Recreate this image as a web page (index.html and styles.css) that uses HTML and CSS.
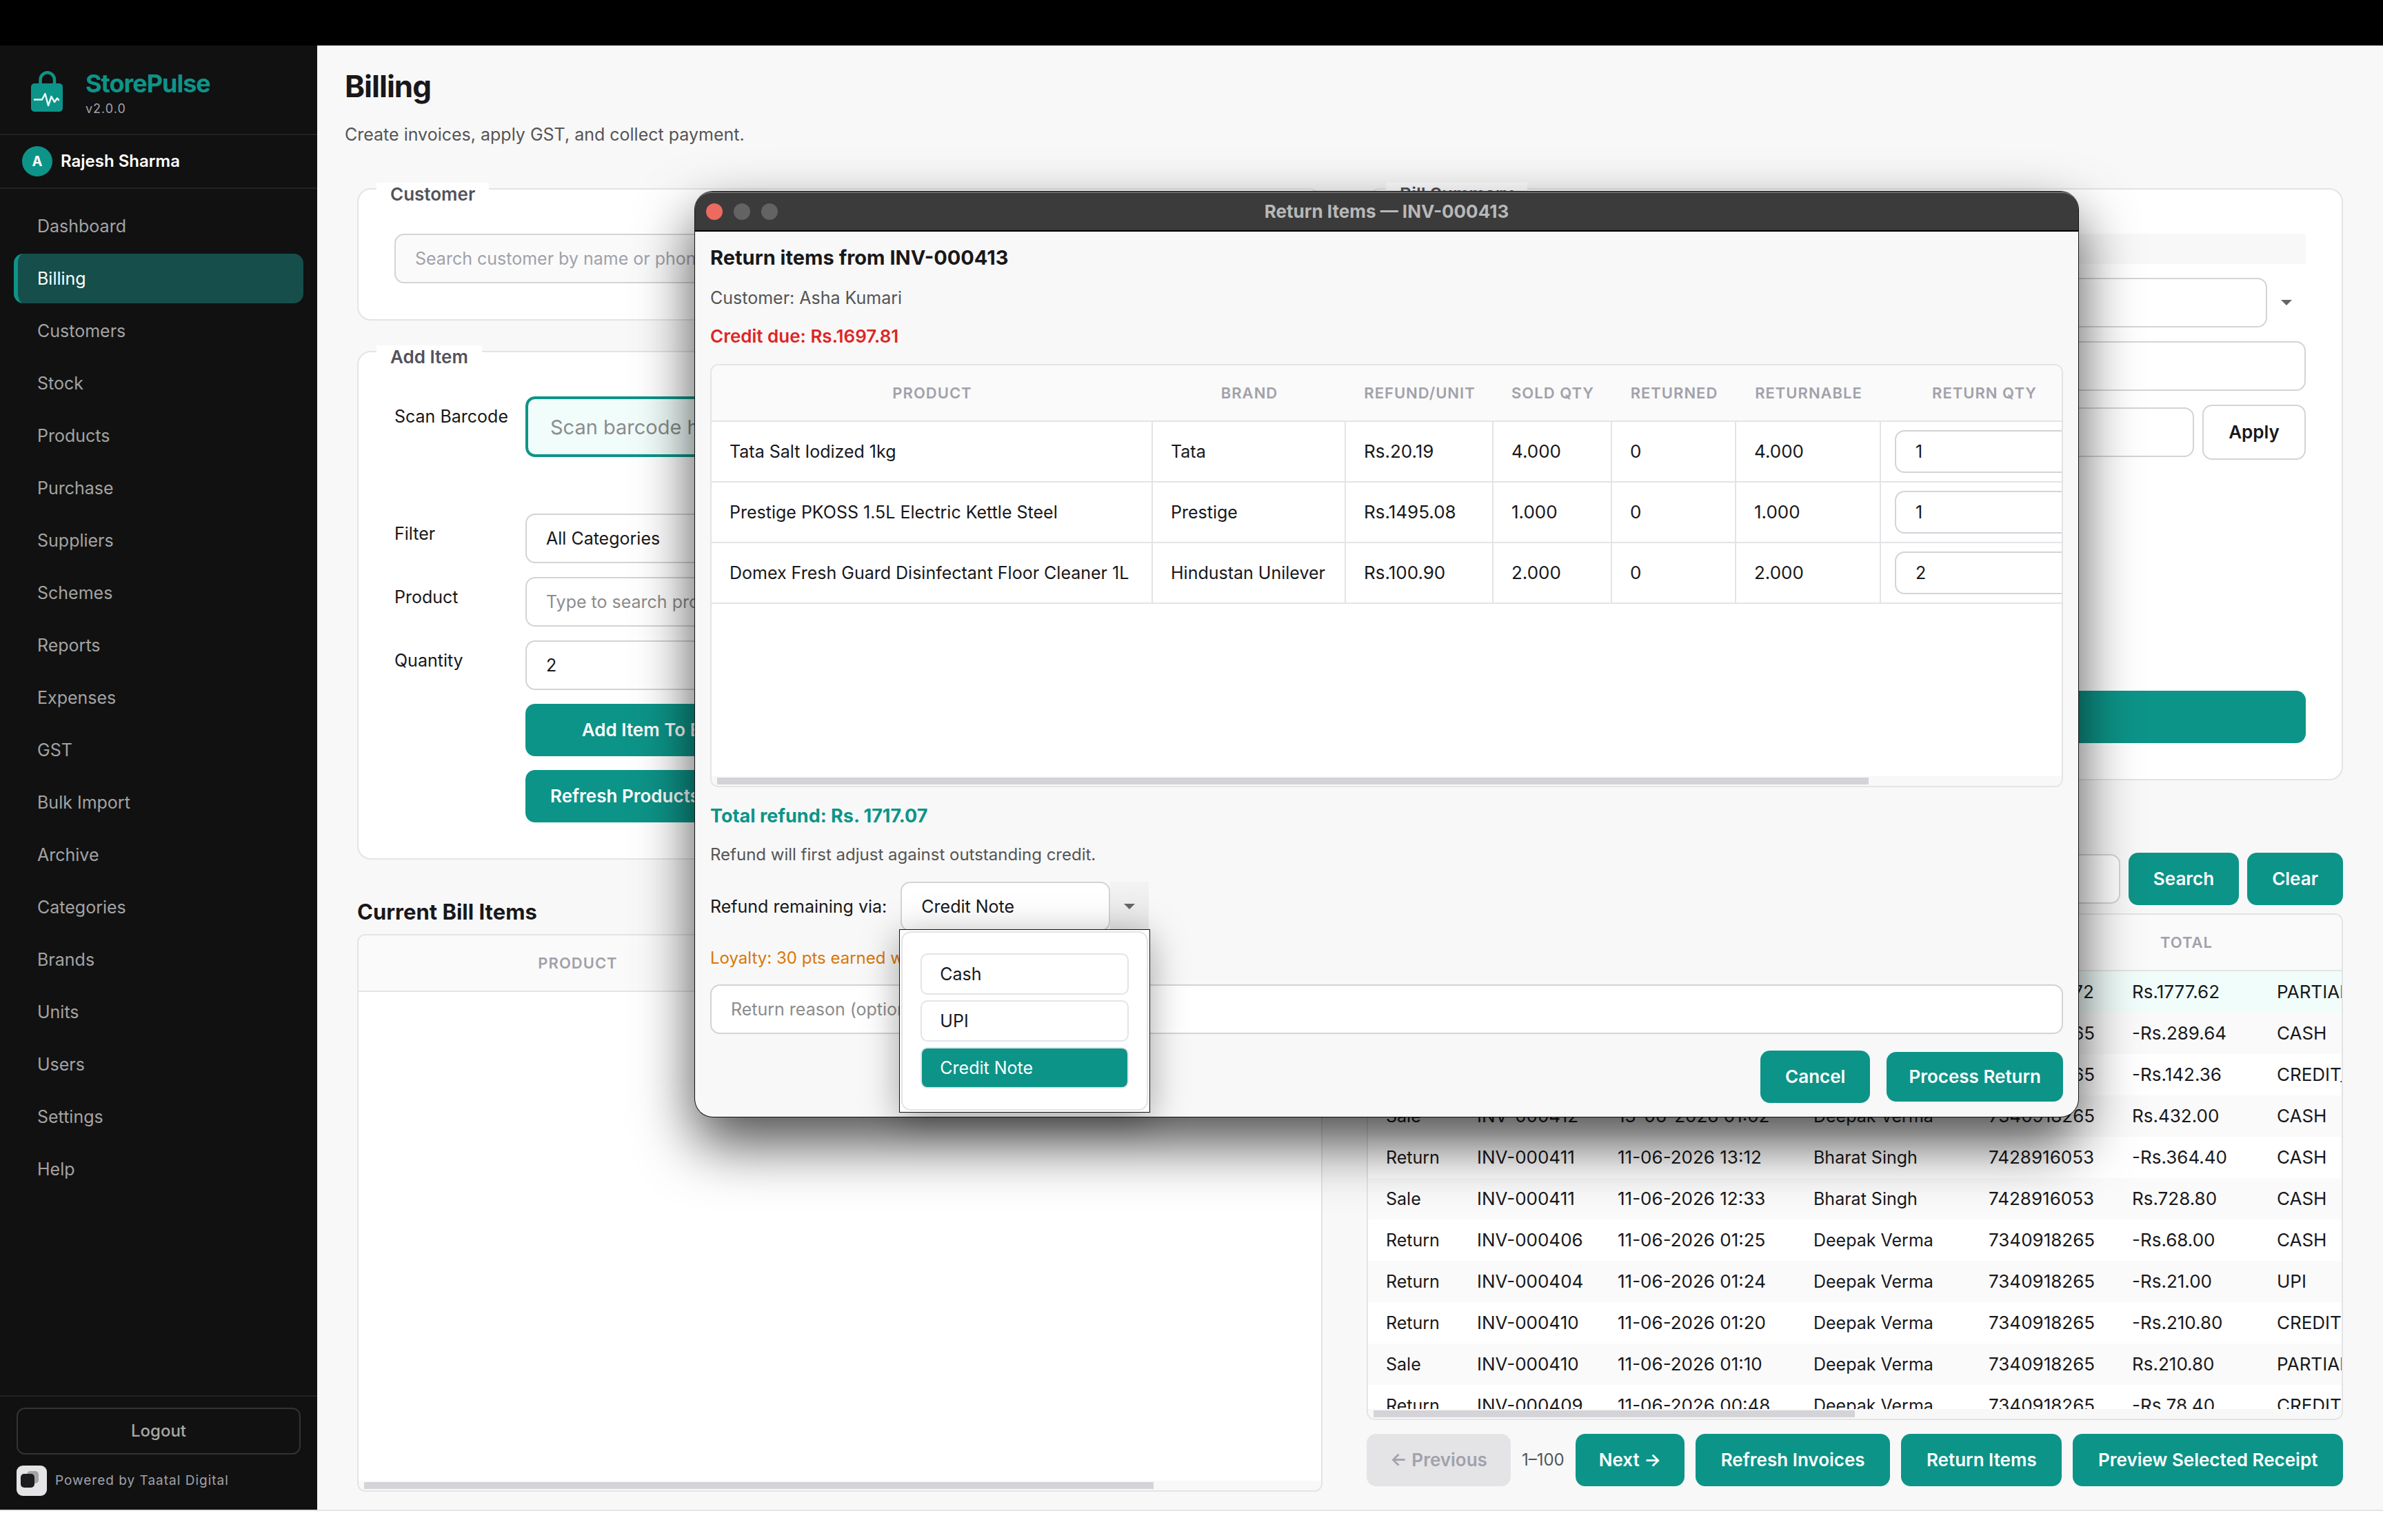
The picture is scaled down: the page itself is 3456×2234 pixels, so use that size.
FILE: index.html
```html
<!DOCTYPE html>
<html lang="en">
<head>
<meta charset="utf-8">
<title>StorePulse – Billing</title>
<link rel="stylesheet" href="styles.css">
</head>
<body>
<div class="screen">
  <div class="menubar"></div>
  <div class="app">
    <aside class="sidebar">
      <div class="brand">
        <svg class="brand-logo" viewBox="0 0 46 60" aria-hidden="true">
          <path d="M13.500 22V14a10 10.500 0 0 1 20.500 0v8" fill="none" stroke="#0d9488" stroke-width="4.500"/>
          <rect x="0" y="19" width="46" height="41" rx="5" fill="#0d9488"/>
          <path d="M5 42.500H16L20.500 34L25 51L29.500 38L34 46L38 40.500L40 43" fill="none" stroke="#e8faf7" stroke-width="2.500" stroke-linejoin="round" stroke-linecap="round"/>
        </svg>
        <div class="brand-text">
          <div class="brand-name">StorePulse</div>
          <div class="brand-version">v2.0.0</div>
        </div>
      </div>
      <div class="user"><span class="avatar">A</span><span>Rajesh Sharma</span></div>
      <nav class="nav">
        <a href="#">Dashboard</a>
        <a href="#" class="active">Billing</a>
        <a href="#">Customers</a>
        <a href="#">Stock</a>
        <a href="#">Products</a>
        <a href="#">Purchase</a>
        <a href="#">Suppliers</a>
        <a href="#">Schemes</a>
        <a href="#">Reports</a>
        <a href="#">Expenses</a>
        <a href="#">GST</a>
        <a href="#">Bulk Import</a>
        <a href="#">Archive</a>
        <a href="#">Categories</a>
        <a href="#">Brands</a>
        <a href="#">Units</a>
        <a href="#">Users</a>
        <a href="#">Settings</a>
        <a href="#">Help</a>
      </nav>
      <div class="sidebar-foot">
        <button class="logout">Logout</button>
        <div class="powered">
          <svg class="powered-logo" viewBox="0 0 44 44" aria-hidden="true">
            <rect width="44" height="44" rx="9" fill="#e4e4e7"/>
            <rect x="15" y="8" width="17" height="18" rx="5" fill="#a3a3a5"/>
            <rect x="6" y="12" width="20" height="20" rx="5" fill="#1c1c1f"/>
          </svg>
          <span>Powered by Taatal Digital</span>
        </div>
      </div>
    </aside>

    <main class="main">
      <h1>Billing</h1>
      <p class="subtitle">Create invoices, apply GST, and collect payment.</p>
      <div class="columns">
        <div class="column">
          <section class="group">
            <h2 class="group-title">Customer</h2>
            <div class="group-body">
              <input class="field muted" type="text" aria-label="Customer" placeholder="Search customer by name or phone">
            </div>
          </section>
          <section class="group">
            <h2 class="group-title">Add Item</h2>
            <div class="group-body">
              <div class="form-row"><label for="barcode">Scan Barcode</label><input class="field barcode" id="barcode" type="text" placeholder="Scan barcode here"></div>
              <div class="status-line"></div>
              <div class="form-row"><label for="filter">Filter</label><select class="field" id="filter"><option>All Categories</option></select></div>
              <div class="form-row"><label for="product">Product</label><input class="field" id="product" type="text" placeholder="Type to search products"></div>
              <div class="form-row"><label for="qty">Quantity</label><input class="field" id="qty" type="text" value="2"></div>
              <div class="form-row"><span></span><button class="btn add-btn">Add Item To Bill</button></div>
              <div class="form-row"><span></span><button class="btn refresh-btn">Refresh Products</button></div>
            </div>
          </section>
          <h2 class="section-title">Current Bill Items</h2>
          <div class="grid-box grow">
            <div class="grid-view">
              <table class="bill-table">
                <thead><tr><th class="w-product">Product</th><th></th></tr></thead>
              </table>
            </div>
            <div class="scroll"><div class="thumb thumb-bill"></div></div>
          </div>
        </div>

        <div class="column">
          <section class="group">
            <h2 class="group-title">Bill Summary</h2>
            <div class="group-body">
              <div class="summary-strip"></div>
              <div class="combo">
                <select class="field" aria-label="Payment mode"><option></option></select>
                <span class="combo-arrow"><svg viewBox="0 0 16 8"><path d="M0 0h16l-8 8z"/></svg></span>
              </div>
              <input class="field" type="text" aria-label="Amount">
              <div class="apply-row"><input class="field" type="text" aria-label="Coupon code"><button class="btn-outline">Apply</button></div>
              <div class="totals"></div>
              <button class="btn" aria-label="Create invoice"></button>
            </div>
          </section>
          <div class="search-row">
            <input class="field" type="text" aria-label="Search invoices">
            <button class="btn">Search</button>
            <button class="btn">Clear</button>
          </div>
          <div class="grid-box grow">
            <div class="grid-view">
              <table class="invoice-table">
                <thead><tr><th class="w-type">Type</th><th class="w-inv">Invoice</th><th class="w-date">Date</th><th class="w-name">Customer</th><th class="w-phone">Phone</th><th class="w-total">Total</th><th></th></tr></thead>
                <tbody>
                  <tr class="selected"><td>Sale</td><td>INV-000413</td><td>13-06-2026 01:40</td><td>Asha Kumari</td><td>7340918272</td><td>Rs.1777.62</td><td>PARTIAL</td></tr>
                  <tr><td>Return</td><td>INV-000412</td><td>13-06-2026 01:12</td><td>Deepak Verma</td><td>7340918265</td><td>-Rs.289.64</td><td>CASH</td></tr>
                  <tr><td>Return</td><td>INV-000412</td><td>13-06-2026 01:10</td><td>Deepak Verma</td><td>7340918265</td><td>-Rs.142.36</td><td>CREDIT_NOTE</td></tr>
                  <tr><td>Sale</td><td>INV-000412</td><td>13-06-2026 01:02</td><td>Deepak Verma</td><td>7340918265</td><td>Rs.432.00</td><td>CASH</td></tr>
                  <tr><td>Return</td><td>INV-000411</td><td>11-06-2026 13:12</td><td>Bharat Singh</td><td>7428916053</td><td>-Rs.364.40</td><td>CASH</td></tr>
                  <tr><td>Sale</td><td>INV-000411</td><td>11-06-2026 12:33</td><td>Bharat Singh</td><td>7428916053</td><td>Rs.728.80</td><td>CASH</td></tr>
                  <tr><td>Return</td><td>INV-000406</td><td>11-06-2026 01:25</td><td>Deepak Verma</td><td>7340918265</td><td>-Rs.68.00</td><td>CASH</td></tr>
                  <tr><td>Return</td><td>INV-000404</td><td>11-06-2026 01:24</td><td>Deepak Verma</td><td>7340918265</td><td>-Rs.21.00</td><td>UPI</td></tr>
                  <tr><td>Return</td><td>INV-000410</td><td>11-06-2026 01:20</td><td>Deepak Verma</td><td>7340918265</td><td>-Rs.210.80</td><td>CREDIT</td></tr>
                  <tr><td>Sale</td><td>INV-000410</td><td>11-06-2026 01:10</td><td>Deepak Verma</td><td>7340918265</td><td>Rs.210.80</td><td>PARTIAL</td></tr>
                  <tr><td>Return</td><td>INV-000409</td><td>11-06-2026 00:48</td><td>Deepak Verma</td><td>7340918265</td><td>-Rs.78.40</td><td>CREDIT</td></tr>
                </tbody>
              </table>
            </div>
            <div class="scroll"><div class="thumb thumb-invoices"></div></div>
          </div>
          <div class="pager">
            <button class="btn" disabled>← Previous</button>
            <span class="page-range">1–100</span>
            <button class="btn">Next →</button>
            <button class="btn wide">Refresh Invoices</button>
            <button class="btn wide">Return Items</button>
            <button class="btn wide">Preview Selected Receipt</button>
          </div>
        </div>
      </div>
    </main>
  </div>
  <div class="below"></div>

  <div class="dialog" role="dialog" aria-labelledby="dialog-title">
    <div class="titlebar">
      <div class="lights"><span class="light close"></span><span class="light"></span><span class="light"></span></div>
      <div class="dialog-title" id="dialog-title">Return Items — INV-000413</div>
    </div>
    <div class="dialog-body">
      <h2 class="dialog-heading">Return items from INV-000413</h2>
      <p class="line customer">Customer: Asha Kumari</p>
      <p class="line due">Credit due: Rs.1697.81</p>
      <div class="grid-box return-box">
        <div class="grid-view">
          <table class="return-table">
            <thead><tr><th class="r-product">Product</th><th class="r-brand">Brand</th><th class="r-unit">Refund/Unit</th><th class="r-sold">Sold Qty</th><th class="r-returned">Returned</th><th class="r-returnable">Returnable</th><th class="r-qty">Return Qty</th></tr></thead>
            <tbody>
              <tr><td>Tata Salt Iodized 1kg</td><td>Tata</td><td class="num">Rs.20.19</td><td class="num">4.000</td><td class="num">0</td><td class="num">4.000</td><td class="qty-cell"><input class="field" type="text" aria-label="Return quantity, Tata Salt" value="1"></td></tr>
              <tr><td>Prestige PKOSS 1.5L Electric Kettle Steel</td><td>Prestige</td><td class="num">Rs.1495.08</td><td class="num">1.000</td><td class="num">0</td><td class="num">1.000</td><td class="qty-cell"><input class="field" type="text" aria-label="Return quantity, Kettle" value="1"></td></tr>
              <tr><td>Domex Fresh Guard Disinfectant Floor Cleaner 1L</td><td>Hindustan Unilever</td><td class="num">Rs.100.90</td><td class="num">2.000</td><td class="num">0</td><td class="num">2.000</td><td class="qty-cell"><input class="field" type="text" aria-label="Return quantity, Floor Cleaner" value="2"></td></tr>
            </tbody>
          </table>
        </div>
        <div class="scroll"><div class="thumb thumb-return"></div></div>
      </div>
      <p class="total">Total refund: Rs. 1717.07</p>
      <p class="note">Refund will first adjust against outstanding credit.</p>
      <div class="via-row">
        <label for="via">Refund remaining via:</label>
        <div class="combo via-combo">
          <select class="field" id="via"><option>Credit Note</option></select>
          <span class="combo-arrow"><svg viewBox="0 0 16 8"><path d="M0 0h16l-8 8z"/></svg></span>
          <div class="popup">
            <div class="popup-list" role="listbox" aria-label="Refund remaining via">
              <button class="choice" role="option">Cash</button>
              <button class="choice" role="option">UPI</button>
              <button class="choice chosen" role="option" aria-selected="true">Credit Note</button>
            </div>
          </div>
        </div>
      </div>
      <p class="note loyalty">Loyalty: 30 pts earned will</p>
      <input class="field" type="text" aria-label="Return reason" placeholder="Return reason (optional)">
      <div class="actions"><button class="btn">Cancel</button><button class="btn process">Process Return</button></div>
    </div>
  </div>
</div>
</body>
</html>
```
FILE: styles.css
```css
* { box-sizing: border-box; }
body, h1, h2, p { margin: 0; }
body {
  font-family: Inter, "Liberation Sans", sans-serif;
  font-size: 25px;
  line-height: 32px;
  color: #18181b;
  background: #fff;
}
button, input, select { font: inherit; color: inherit; margin: 0; }

.screen { position: relative; display: flex; flex-direction: column; height: 100vh; overflow: hidden; }
.menubar { height: 66px; background: #000; flex: none; }
.app { flex: 1; min-height: 0; display: flex; background: #f8f8f8; }
.below { height: 44px; flex: none; border-top: 2px solid #e4e4e7; }

/* Sidebar */
.sidebar { width: 460px; flex: none; display: flex; flex-direction: column; background: #111; }
.brand { display: flex; align-items: center; gap: 33px; height: 130px; padding: 4px 45px 0; border-bottom: 2px solid #222; }
.brand-logo { width: 46px; height: 60px; }
.brand-text { padding-top: 8px; }
.brand-name { font-size: 36px; line-height: 44px; font-weight: 700; color: #0d9488; letter-spacing: -1px; }
.brand-version { font-size: 18px; line-height: 30px; color: #a1a1aa; letter-spacing: 1px; }
.user { display: flex; align-items: center; gap: 12px; height: 78px; padding: 0 32px; border-bottom: 2px solid #222; color: #fff; font-size: 24px; font-weight: 600; }
.avatar { width: 44px; height: 44px; border-radius: 50%; background: #0d9488; font-size: 20px; font-weight: 700; line-height: 44px; text-align: center; }
.nav { flex: 1; min-height: 0; display: flex; flex-direction: column; gap: 4px; padding: 18px 20px; }
.nav a { flex: none; height: 72px; line-height: 72px; padding-left: 28px; border-left: 6px solid transparent; border-radius: 14px; color: #a3a3a3; text-decoration: none; }
.nav .active { background: #154e4a; border-left-color: #0d9488; color: #fff; }
.sidebar-foot { display: flex; flex-direction: column; gap: 16px; padding: 16px 24px 20px; border-top: 2px solid #222; }
.logout { height: 68px; border: 2px solid #333; border-radius: 12px; background: none; color: #a8a8a8; font-size: 24px; font-weight: 500; }
.powered { display: flex; align-items: center; gap: 12px; color: #a1a1aa; font-size: 19px; letter-spacing: 1px; }
.powered-logo { width: 44px; height: 44px; }

/* Page */
.main { flex: 1; min-width: 0; display: flex; flex-direction: column; padding: 33px 58px 26px 40px; }
h1 { font-size: 44px; line-height: 52px; font-weight: 700; letter-spacing: -1px; }
.subtitle { margin-top: 28px; color: #555; }
.columns { flex: 1; min-height: 0; display: grid; grid-template-columns: 1400fr 1416fr; gap: 64px; margin: 62px 0 0 18px; }
.column { min-width: 0; min-height: 0; display: flex; flex-direction: column; }

.group { flex: none; border: 2px solid #e4e4e7; border-radius: 20px; background: #fff; padding: 0 52px 52px; }
.group + .group { margin-top: 44px; }
.group-title { width: max-content; height: 34px; margin: -10px 0 0 -26px; padding: 0 20px; background: #fff; font-size: 26px; line-height: 34px; font-weight: 600; color: #52525b; }
.group-body { display: flex; flex-direction: column; gap: 20px; margin-top: 40px; }

.field { display: block; width: 100%; min-width: 0; height: 72px; padding: 0 28px; border: 2px solid #d4d4d8; border-radius: 14px; background: #fff; appearance: none; outline: none; }
.field::placeholder { color: #8c8c8c; opacity: 1; }
.muted { background: #fafafa; }
.muted::placeholder { color: #a1a1aa; }
.barcode { height: 88px; padding: 0 32px; border: 4px solid #0d9488; background: #f0fdfa; font-size: 29px; }
.form-row { display: grid; grid-template-columns: 190px 1fr; }
.form-row label { padding-top: 13px; }
.status-line { height: 42px; }

.btn { height: 76px; padding: 0 36px; border: 0; border-radius: 14px; background: #0d9488; color: #fff; font-size: 26px; font-weight: 600; white-space: nowrap; }
.btn:disabled { background: #e4e4e7; color: #a1a1aa; }
.add-btn { width: 358px; }
.refresh-btn { justify-self: start; }
.btn-outline { flex: none; height: 80px; width: 150px; border: 2px solid #d4d4d8; border-radius: 14px; background: #fff; font-size: 26px; font-weight: 600; }

.combo { position: relative; display: flex; }
.combo .field { flex: 1; }
.combo-arrow { width: 56px; display: flex; align-items: center; justify-content: center; }
.combo-arrow svg { width: 16px; height: 8px; fill: #666; }
.summary-strip { height: 44px; background: #f8f8f8; }
.apply-row { display: flex; align-items: center; gap: 12px; }
.totals { height: 295px; }

.section-title { margin: 56px 0 12px; font-size: 31px; line-height: 40px; font-weight: 700; }
.search-row { display: flex; align-items: center; gap: 12px; margin: 105px 0 12px; }
.search-row .btn { flex: none; }

/* Data grids */
.grid-box { display: flex; flex-direction: column; min-height: 0; border: 2px solid #e4e4e7; border-radius: 12px; background: #fff; overflow: hidden; }
.grow { flex: 1; }
.grid-view { flex: 1; min-height: 0; overflow: hidden; }
.scroll { flex: none; height: 14px; padding: 2px 8px; background: #f8f8f8; }
.thumb { height: 10px; background: #d4d4d8; }
.thumb-bill { width: 83%; }
.thumb-invoices { width: 50%; }
.thumb-return { width: 86%; }
table { border-collapse: separate; border-spacing: 0; table-layout: fixed; }
th { height: 82px; padding: 0; border-bottom: 2px solid #e4e4e7; background: #fafafa; color: #a1a1aa; font-size: 22px; font-weight: 600; letter-spacing: 1px; text-transform: uppercase; text-align: center; }
td { padding: 0 0 0 26px; white-space: nowrap; overflow: hidden; }

.bill-table { width: 1660px; }
.w-product { width: 636px; }

.invoice-table { width: 1800px; font-size: 26px; }
.invoice-table td { height: 60px; }
.invoice-table td:first-child, .invoice-table td:nth-child(4) { font-size: 25px; }
.invoice-table tbody tr:nth-child(even) { background: #fafafa; }
.invoice-table .selected { background: #f0fdfa; }
.w-type { width: 132px; }
.w-inv { width: 204px; }
.w-date { width: 284px; }
.w-name { width: 254px; }
.w-phone { width: 208px; }
.w-total { width: 210px; }

.pager { display: flex; align-items: center; gap: 16px; margin: 20px 0 8px; }
.page-range { color: #555; font-size: 24px; white-space: nowrap; }
.pager .btn { flex: none; padding: 0 34px; }
.pager .wide { flex: 1 0 auto; }

/* Return dialog */
.dialog { position: absolute; top: 278px; left: 1008px; right: 442px; border-radius: 26px; background: #f8f8f8; box-shadow: 0 0 0 1px #111, 0 38px 84px rgba(0, 0, 0, .7); }
.titlebar { position: relative; height: 58px; display: flex; align-items: center; justify-content: center; border-radius: 24px 24px 0 0; background: #3b3b3b; border-top: 2px solid #6a6a6a; border-bottom: 2px solid #000; }
.lights { position: absolute; left: 16px; display: flex; gap: 16px; }
.light { width: 24px; height: 24px; border-radius: 50%; background: #636363; }
.close { background: #ed6a5f; }
.dialog-title { color: #b8b8b8; font-size: 26px; font-weight: 700; }
.dialog-body { display: flex; flex-direction: column; gap: 24px; padding: 20px 22px; }
.dialog-heading { font-size: 29px; line-height: 36px; font-weight: 700; }
.line { line-height: 32px; }
.customer { color: #555; }
.due { color: #dc2626; font-size: 26px; font-weight: 600; }
.return-box { height: 614px; }
.return-table { width: 1996px; }
.return-table td { height: 88px; border-right: 2px solid #e4e4e7; border-bottom: 2px solid #e4e4e7; }
.return-table .num { font-size: 26px; }
.return-table .qty-cell { padding: 0 20px; }
.qty-cell .field { height: 62px; }
.r-product { width: 640px; }
.r-brand { width: 280px; }
.r-unit { width: 214px; }
.r-sold { width: 172px; }
.r-returned { width: 180px; }
.r-returnable { width: 210px; }
.r-qty { width: 300px; }
.total { font-size: 27px; line-height: 36px; font-weight: 700; color: #0d9488; }
.note { font-size: 24px; line-height: 28px; color: #555; }
.loyalty { color: #d97706; }
.via-row { display: flex; align-items: center; gap: 20px; height: 74px; }
.via-combo { width: 360px; }
.via-combo .combo-arrow { background: linear-gradient(#f3f3f3, #e6e6e6); }
.popup { position: absolute; z-index: 2; top: 69px; left: -2px; right: -2px; padding: 2px; border: 1px solid #111; background: #fff; box-shadow: 0 10px 50px rgba(0, 0, 0, .35); }
.popup-list { display: flex; flex-direction: column; gap: 8px; padding: 30px 26px; border: 2px solid #e4e4e7; border-radius: 14px; }
.choice { height: 60px; padding: 0 26px; border: 2px solid #e4e4e7; border-radius: 10px; background: #fff; text-align: left; }
.chosen { background: #0d9488; color: #fff; }
.actions { display: flex; align-items: center; justify-content: flex-end; gap: 24px; }
.process { height: 72px; padding: 0 32px; }
```
